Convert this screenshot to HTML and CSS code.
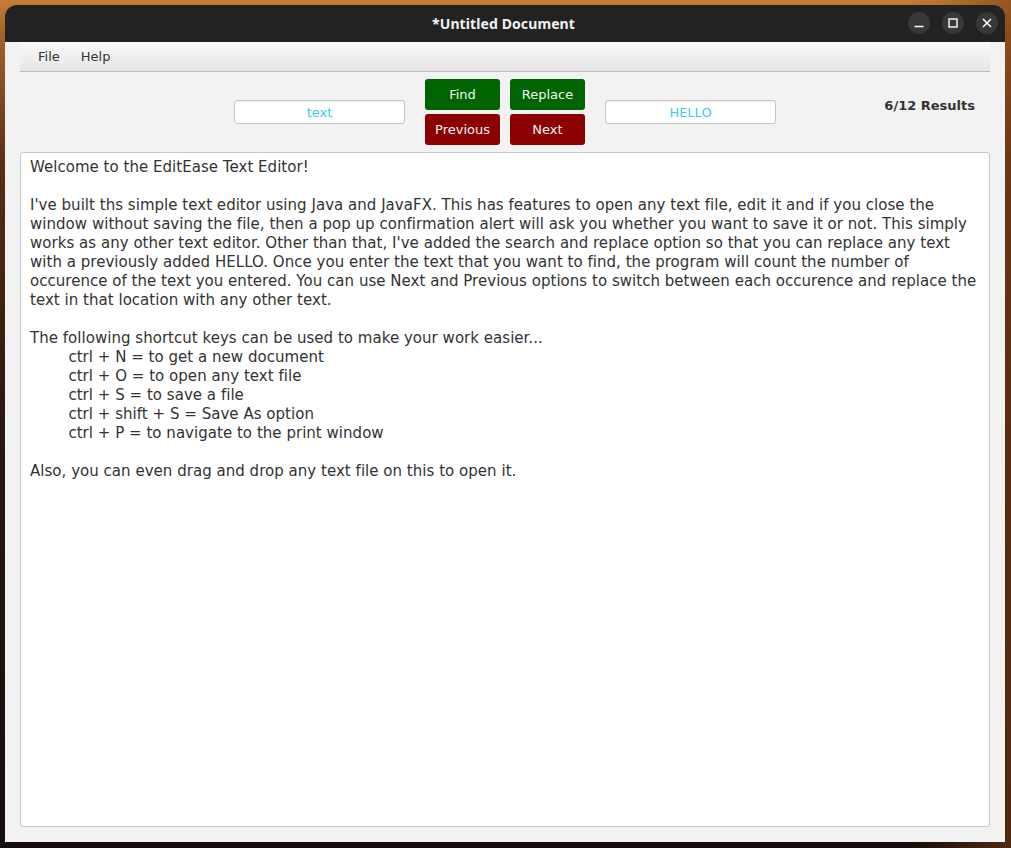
FILE: index.html
```html
<!DOCTYPE html>
<html>
<head>
<meta charset="utf-8">
<title>*Untitled Document</title>
<link rel="stylesheet" href="styles.css">
</head>
<body>
<div class="window">
  <div class="titlebar">
    <div class="title">*Untitled Document</div>
    <div class="controls">
      <span class="ctl"><svg width="22" height="22" viewBox="0 0 22 22"><path d="M6.5 14.5h9" stroke="#fff" stroke-width="1.6"/></svg></span>
      <span class="ctl"><svg width="22" height="22" viewBox="0 0 22 22"><rect x="7" y="7" width="8" height="8" fill="none" stroke="#fff" stroke-width="1.4"/></svg></span>
      <span class="ctl"><svg width="22" height="22" viewBox="0 0 22 22"><path d="M7 7l8 8M15 7l-8 8" stroke="#fff" stroke-width="1.5"/></svg></span>
    </div>
  </div>
  <div class="content">
    <div class="menubar">
      <span class="menu">File</span>
      <span class="menu">Help</span>
    </div>
    <div class="toolbar">
      <div class="group">
        <div class="field">text</div>
        <div class="buttons">
          <span class="btn green">Find</span>
          <span class="btn green">Replace</span>
          <span class="btn red">Previous</span>
          <span class="btn red">Next</span>
        </div>
        <div class="field">HELLO</div>
      </div>
      <div class="results">6/12 Results</div>
    </div>
    <div class="editor"><pre class="doc">Welcome to the EditEase Text Editor!

I've built ths simple text editor using Java and JavaFX. This has features to open any text file, edit it and if you close the
window without saving the file, then a pop up confirmation alert will ask you whether you want to save it or not. This simply
works as any other text editor. Other than that, I've added the search and replace option so that you can replace any text
with a previously added HELLO. Once you enter the text that you want to find, the program will count the number of
occurence of the text you entered. You can use Next and Previous options to switch between each occurence and replace the
text in that location with any other text.

The following shortcut keys can be used to make your work easier...
	ctrl + N = to get a new document
	ctrl + O = to open any text file
	ctrl + S = to save a file
	ctrl + shift + S = Save As option
	ctrl + P = to navigate to the print window

Also, you can even drag and drop any text file on this to open it.</pre></div>
  </div>
</div>
</body>
</html>
```
FILE: styles.css
```css
html, body {
  margin: 0;
  height: 100%;
}
body {
  padding: 5px 6px 6px 5px;
  box-sizing: border-box;
  background:
    linear-gradient(to right, rgba(20,10,8,0.0) 0%, rgba(20,10,8,0) 90%, rgba(120,60,20,0.6) 100%),
    linear-gradient(to bottom, #c47e35 0px, #a8642a 30px, #5a2e16 160px, #2a1710 420px, #150d0d 848px);
  font-family: "DejaVu Sans", sans-serif;
}
.window {
  width: 1000px;
  height: 837px;
  display: flex;
  flex-direction: column;
  border-radius: 12px 12px 0 0;
  overflow: hidden;
}
.titlebar {
  height: 37px;
  background: #222222;
  position: relative;
  display: flex;
  align-items: center;
  justify-content: center;
  flex: none;
}
.title {
  font-family: "Noto Sans", "Open Sans", sans-serif;
  font-weight: 700;
  font-size: 14px;
  color: #f2f2f2;
  margin-top: 0;
  margin-left: -3px;
  letter-spacing: 0.1px;
}
.controls {
  position: absolute;
  right: 7px;
  top: 7px;
  display: flex;
  gap: 12px;
}
.ctl {
  width: 22px;
  height: 22px;
  border-radius: 50%;
  background: #383838;
  display: block;
}
.ctl svg { display: block; }
.content {
  flex: 1;
  background: #f2f2f2;
  padding: 0 15px 15px 15px;
  display: flex;
  flex-direction: column;
}
.menubar {
  height: 29px;
  border-bottom: 1px solid #bcbcbc;
  background: linear-gradient(to bottom, #f9f9f9, #e6e6e6);
  display: flex;
  align-items: center;
  padding-left: 18px;
  gap: 21px;
  flex: none;
}
.menu {
  font-size: 13px;
  color: #333;
}
.toolbar {
  height: 80px;
  flex: none;
  position: relative;
  display: flex;
  justify-content: center;
}
.group {
  display: flex;
  align-items: center;
  gap: 20px;
}
.field {
  width: 169px;
  height: 22px;
  border: 1px solid #c6c6c6;
  border-radius: 3px;
  background: linear-gradient(to bottom, #f3f3f3, #ffffff 3px);
  color: #3fc8f4;
  font-size: 13px;
  display: flex;
  align-items: center;
  justify-content: center;
}
.buttons {
  display: grid;
  grid-template-columns: 75px 75px;
  grid-auto-rows: 31px;
  column-gap: 10px;
  row-gap: 4px;
}
.btn {
  border-radius: 3px;
  color: #f4f4f4;
  font-size: 13px;
  display: flex;
  align-items: center;
  justify-content: center;
}
.green { background: #006400; }
.red { background: #8b0000; }
.results {
  position: absolute;
  right: 15px;
  top: 26px;
  font-size: 13px;
  font-weight: 700;
  color: #333;
}
.editor {
  flex: 1;
  background: #ffffff;
  border: 1px solid #c8c8c8;
  border-radius: 3px;
  padding: 5px 9px;
  overflow: hidden;
}
.doc {
  margin: 0;
  font-family: "DejaVu Sans", sans-serif;
  font-size: 15px;
  line-height: 19px;
  color: #333;
  white-space: pre;
  tab-size: 8;
  letter-spacing: 0.03px;
}
```
